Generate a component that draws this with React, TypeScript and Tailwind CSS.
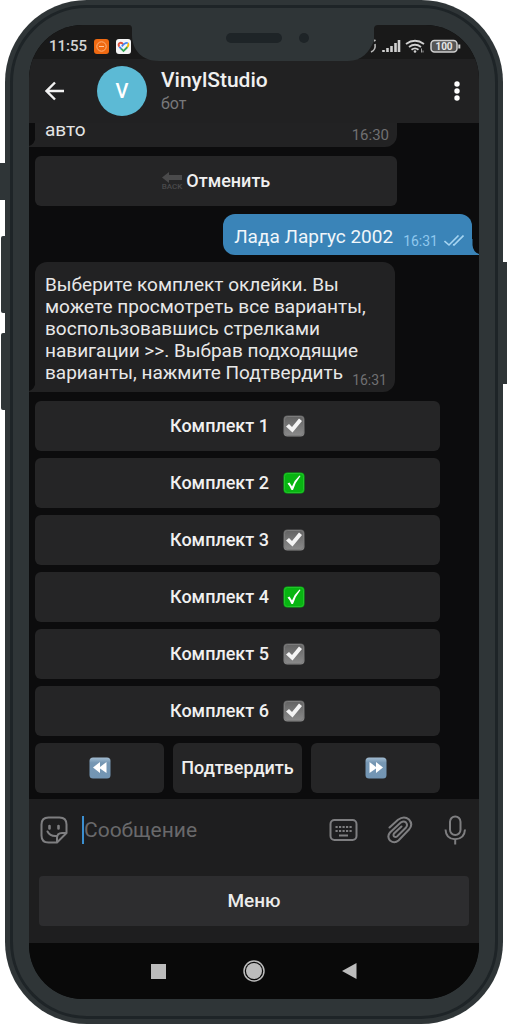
import { useState } from "react";

const KITS = [1, 2, 3, 4, 5, 6];

function Notch() {
  return (
    <svg className="absolute top-0 left-1/2 -translate-x-1/2 z-10" width="250" height="36" viewBox="0 0 250 36" aria-hidden="true">
      <path d="M0 0Q3 0 3 4V10C3 25 13 36 30 36H219C233 36 240 27 245 16V4Q245 0 249 0Z" fill="#2f3537" />
      <rect x="97" y="8" width="56" height="10" rx="5" fill="#1e2427" />
      <circle cx="175" cy="13" r="5" fill="#1e2427" />
    </svg>
  );
}

function StatusBar() {
  return (
    <div className="flex h-[34px] items-center bg-[#191919] pt-2 pl-5 pr-[18px]">
      <span className="text-[15px] leading-5 font-medium text-[#d4d4d4]">11:55</span>
      <svg className="ml-[7px]" width="15" height="15" viewBox="0 0 15 15" aria-hidden="true">
        <rect width="15" height="15" rx="3" fill="#f06a12" />
        <circle cx="7.5" cy="7.5" r="4.7" fill="none" stroke="#ffb27a" strokeWidth="1" />
        <path d="M5 7.5h5" stroke="#ffc79c" strokeWidth="1.2" />
      </svg>
      <svg className="ml-[7px]" width="15" height="15" viewBox="0 0 15 15" aria-hidden="true">
        <rect width="15" height="15" rx="3" fill="#f5f5f5" />
        <g fill="none" strokeWidth="1.8">
          <path d="M7.5 5.7Q5.6 2.8 3.4 4.2Q1.8 5.8 3.4 7.8" stroke="#e0523f" />
          <path d="M3.4 7.8L5.4 9.8" stroke="#4285f4" />
          <path d="M5.2 9.6L7.5 12L11.5 8" stroke="#3aa757" />
          <path d="M11.3 8.2Q13.3 6 11.8 4.2" stroke="#fbbc05" />
          <path d="M11.8 4.2Q9.6 2.8 5.8 7.4" stroke="#4285f4" />
        </g>
      </svg>
      <svg className="ml-auto" width="91" height="16" viewBox="0 0 91 16" aria-hidden="true">
        <path d="M1 14Q6 12 5 6M4 3L5.5 2" fill="none" stroke="#b8b8b8" strokeWidth="1.6" />
        <g stroke="#d0d0d0" strokeWidth="2.6">
          <path d="M13.5 14v-2M17.5 14v-4M21.5 14v-6M25.500 14V5M29 14V2" />
        </g>
        <g fill="none" stroke="#d0d0d0" strokeWidth="1.8">
          <path d="M36 6Q45 -.5 54 6M39 9Q45 4.500 51 9" />
          <path d="M41.500 11.800Q45 9 48.500 11.800" />
        </g>
        <circle cx="45" cy="13.500" r="1.300" fill="#d0d0d0" />
        <path d="M51.500 10.500v4M53 12.500v2" stroke="#a0a0a0" />
        <rect x="61" y="2.500" width="26" height="11.500" rx="3.500" fill="#555" stroke="#d0d0d0" strokeWidth="1.500" />
        <path d="M89.300 6.500v4" stroke="#d0d0d0" strokeWidth="2" />
        <text x="74" y="11.800" textAnchor="middle" fontSize="10" fontWeight="700" fill="#e6e6e6">100</text>
      </svg>
    </div>
  );
}

function Header() {
  return (
    <header className="flex h-16 items-center bg-[#212122] pl-4 pr-[18px]">
      <button aria-label="Назад" className="text-[#f2f2f2]">
        <svg width="19" height="20" viewBox="0 0 19 20" fill="none" stroke="currentColor" strokeWidth="2.400">
          <path d="M19 10H2M10 1.500L1.500 10L10 18.500" />
        </svg>
      </button>
      <div className="ml-[33px] flex h-[50px] w-[50px] shrink-0 items-center justify-center rounded-full bg-[#5cbad5] text-xl font-medium text-white">
        V
      </div>
      <div className="ml-3.5 flex-1 pt-0.5">
        <h1 className="text-[21px] leading-6 font-medium text-[#f0f0f0]">VinylStudio</h1>
        <p className="text-base leading-6 text-[#78787a]">бот</p>
      </div>
      <button aria-label="Ещё" className="text-white">
        <svg width="8" height="22" viewBox="0 0 8 22" fill="currentColor">
          <circle cx="4" cy="4" r="2.700" />
          <circle cx="4" cy="11" r="2.700" />
          <circle cx="4" cy="18" r="2.700" />
        </svg>
      </button>
    </header>
  );
}

function Tail({ side }: { side: "left" | "right" }) {
  return (
    <svg
      className={side === "left" ? "absolute bottom-0 -left-1.5" : "absolute bottom-0 -right-[7px] -scale-x-100"}
      width="8"
      height="16"
      viewBox="0 0 8 16"
      aria-hidden="true"
    >
      <path d="M8 0H6.500V6Q6 13 0 15V16H8Z" fill={side === "left" ? "#222223" : "#3a84b8"} />
    </svg>
  );
}

function KitMark({ on }: { on: boolean }) {
  return (
    <svg width="22" height="22" viewBox="0 0 22 22" aria-hidden="true">
      <defs>
        <linearGradient id="kitOff" x1="0" y1="0" x2="0" y2="1">
          <stop offset="0" stopColor="#616161" />
          <stop offset="1" stopColor="#8c8c8c" />
        </linearGradient>
      </defs>
      <rect x="0.500" y="0.500" width="21" height="21" rx="4" fill={on ? "#08b512" : "url(#kitOff)"} />
      <rect x="1.500" y="1.500" width="19" height="19" rx="3" fill="none" stroke={on ? "#22c52a" : "#7c7c7c"} />
      {on ? (
        <path d="M4.500 11.500L6.500 10.500L9 14.500Q11.500 8 16.500 3.500L17.500 4Q12.500 10 10 18H8.500Q7 14 4.500 11.500Z" fill="#fff" />
      ) : (
        <path d="M3 11.500L6 9L9 12L16 3.500L19 6L9.500 17.500Z" fill="#f4f4f4" />
      )}
    </svg>
  );
}

function SeekIcon({ forward }: { forward?: boolean }) {
  return (
    <svg className={forward ? "-scale-x-100" : ""} width="22" height="22" viewBox="0 0 22 22" aria-hidden="true">
      <defs>
        <linearGradient id="seek" x1="0" y1="0" x2="0" y2="1">
          <stop offset="0" stopColor="#a3bdd2" />
          <stop offset="0.250" stopColor="#7697b3" />
          <stop offset="1" stopColor="#7295b4" />
        </linearGradient>
      </defs>
      <rect x="0.500" y="0.500" width="21" height="21" rx="3.500" fill="url(#seek)" />
      <path d="M11 5V10L17.500 5V16L11 11.500V16L4 10.500Z" fill="#fff" />
    </svg>
  );
}

const key =
  "flex h-[50px] items-center justify-center rounded-md bg-[#252526] text-lg leading-6 font-medium text-[#f0f0f0]";

function Composer() {
  return (
    <div className="flex h-[62px] items-center bg-[#1e1e1f] pl-[11px] pr-[13px] text-[#7e7e80]">
      <button aria-label="Стикеры">
        <svg width="28" height="28" viewBox="0 0 28 28" fill="none" stroke="currentColor" strokeWidth="2">
          <path d="M17 26.500H8.500Q1.500 26.500 1.500 19.500V8.500Q1.500 1.500 8.500 1.500H19.500Q26.500 1.500 26.500 8.500V17Z" strokeLinejoin="round" />
          <path d="M17 26.500V22Q17 17 22 17H26.500" />
          <path d="M7.500 15.500Q10 20.500 16.500 20" strokeLinecap="round" />
          <path d="M9.500 10v2.500M18.500 10v2.500" strokeWidth="2.600" strokeLinecap="round" />
        </svg>
      </button>
      <span className="ml-3.5 h-7 w-0.5 bg-[#3b8fd0]" />
      <input
        aria-label="Сообщение"
        placeholder="Сообщение"
        className="min-w-0 flex-1 bg-transparent text-[21px] leading-7 text-white outline-none placeholder:text-[#69696b]"
      />
      <button aria-label="Клавиатура">
        <svg width="29" height="24" viewBox="0 0 29 24" fill="none" stroke="currentColor" strokeWidth="2">
          <rect x="1.500" y="2" width="26" height="20" rx="4" />
          <path d="M6.500 9H23M6.500 13H23" strokeDasharray="2.200 1.300" strokeWidth="2.200" />
          <path d="M10 17.500h9" />
        </svg>
      </button>
      <button aria-label="Прикрепить" className="ml-[29px]">
        <svg width="26" height="28" viewBox="0 0 26 28" fill="none" stroke="currentColor" strokeWidth="2" strokeLinecap="round">
          <path d="M2.500 11.500L11 3.800Q17 -.7 22 3.500Q26.500 8.500 22 13.500L11.500 24.500Q7.500 28 3 24.500Q-.3 20.500 3 16.500L14 6.300Q17 4.500 19 6.500Q21 9 19 11.500L10 20.500Q8.500 21.500 7 20.500Q6 19 7 17.500L14.500 10.500" />
        </svg>
      </button>
      <button aria-label="Голосовое сообщение" className="ml-[31px]">
        <svg width="22" height="30" viewBox="0 0 22 30" fill="none" stroke="currentColor" strokeWidth="2">
          <rect x="6" y="1.500" width="10.500" height="18.500" rx="5.250" />
          <path d="M1.500 14.500Q2 24 11 24.200Q20.500 24 21 14.500M11.200 24.200V29.500" />
        </svg>
      </button>
    </div>
  );
}

export default function App() {
  const [picked, setPicked] = useState([2, 4]);

  const toggle = (n: number) =>
    setPicked(picked.includes(n) ? picked.filter((p) => p !== n) : [...picked, n]);

  return (
    <div className="min-h-screen bg-white pl-[5px] pr-1 font-[Roboto,sans-serif]">
      <div className="relative">
        {/* side buttons */}
        <span className="absolute top-[163px] -left-[5px] h-[37px] w-[6px] bg-[#2f3537]" />
        <span className="absolute top-[236px] -left-1 h-[77px] w-[5px] rounded-l-xs bg-[#2f3537]" />
        <span className="absolute top-[333px] -left-1 h-[77px] w-[5px] rounded-l-xs bg-[#2f3537]" />
        <span className="absolute top-[262px] -right-1 h-[122px] w-[5px] bg-[#2f3537]" />

        <div className="relative rounded-[82px] bg-[#2f3537] p-[5px]">
          <div className="rounded-[77px] border-3 border-[#1e2427] px-4 py-[17px]">
            <main className="relative overflow-hidden rounded-[54px] bg-[#0c0c0d]">
              <Notch />
              <StatusBar />
              <Header />

              <section className="flex flex-col pb-1.5 pl-1.5">
                <div className="relative mr-[82px] flex items-end justify-between rounded-br-xl bg-[#222223] pr-2 pb-1 pl-2.5">
                  <span className="pb-[7px] text-[19px] leading-[13px] text-[#e4e4e4]">авто</span>
                  <time className="text-[15px] leading-4 text-[#707072]">16:30</time>
                  <Tail side="left" />
                </div>

                <button className={`${key} mt-[9px] mr-[82px] gap-1`}>
                  <span className="flex flex-col items-center text-[#4a4a4b]">
                    <svg width="20" height="11" viewBox="0 0 20 11" fill="currentColor" aria-hidden="true">
                      <path d="M0 5.500L7 0V3H20V8H7V11Z" />
                    </svg>
                    <span className="text-[8px] leading-2">BACK</span>
                  </span>
                  Отменить
                </button>

                <div className="relative mt-2 mr-[7px] flex items-end self-end rounded-tl-xl rounded-tr-xl rounded-bl-xl bg-[#3a84b8] pt-2.5 pr-2 pb-1.5 pl-[11px]">
                  <span className="text-[19px] leading-[25px] text-[#f0f6fa]">Лада Ларгус 2002</span>
                  <time className="ml-2.5 text-sm leading-4 text-[#8fc8ee]">16:31</time>
                  <svg className="ml-1.5" width="20" height="14" viewBox="0 0 20 14" fill="none" stroke="#a6d5f2" strokeWidth="1.600" aria-label="Прочитано">
                    <path d="M0.500 6L5 10L14.500 0.500M9 9.500L10 10L19.500 0.500" />
                  </svg>
                  <Tail side="right" />
                </div>

                <div className="relative mt-[7px] mr-[84px] flex items-end justify-between rounded-t-xl rounded-br-xl bg-[#222223] pt-3 pr-2 pb-1 pl-2.5">
                  <p className="pb-1 text-[19px] leading-[22px] whitespace-nowrap text-[#e8e8e8]">
                    Выберите комплект оклейки. Вы
                    <br />
                    можете просмотреть все варианты,
                    <br />
                    воспользовавшись стрелками
                    <br />
                    навигации &gt;&gt;. Выбрав подходящие
                    <br />
                    варианты, нажмите Подтвердить
                  </p>
                  <time className="-ml-10 text-sm leading-4 text-[#707072]">16:31</time>
                  <Tail side="left" />
                </div>

                <div className="mt-[9px] mr-[39px] flex flex-col gap-[7px]">
                  {KITS.map((n) => (
                    <button key={n} className={`${key} gap-3.5`} aria-pressed={picked.includes(n)} onClick={() => toggle(n)}>
                      Комплект {n}
                      <KitMark on={picked.includes(n)} />
                    </button>
                  ))}
                  <div className="grid grid-cols-3 gap-[9px]">
                    <button className={key} aria-label="Предыдущие">
                      <SeekIcon />
                    </button>
                    <button className={key}>Подтвердить</button>
                    <button className={key} aria-label="Следующие">
                      <SeekIcon forward />
                    </button>
                  </div>
                </div>
              </section>

              <Composer />

              <div className="bg-[#1e1e1f] px-2.5 pt-[15px] pb-[17px]">
                <button className="h-[50px] w-full rounded-sm bg-[#2d2d2f] text-[19px] leading-6 font-medium text-[#ececec]">
                  Меню
                </button>
              </div>

              <nav className="flex h-14 items-center justify-center gap-[77px] bg-[#090909] text-[#bcbcbc]">
                <button aria-label="Недавние">
                  <svg width="15" height="15" viewBox="0 0 15 15" fill="currentColor">
                    <rect width="15" height="15" />
                  </svg>
                </button>
                <button aria-label="Домой">
                  <svg width="22" height="22" viewBox="0 0 22 22" fill="currentColor">
                    <circle cx="11" cy="11" r="8" />
                    <circle cx="11" cy="11" r="10" fill="none" stroke="currentColor" strokeWidth="1.500" />
                  </svg>
                </button>
                <button aria-label="Назад">
                  <svg width="15" height="16" viewBox="0 0 15 16" fill="currentColor">
                    <path d="M0 8L14.500 0V16Z" />
                  </svg>
                </button>
              </nav>
            </main>
          </div>
        </div>
      </div>
    </div>
  );
}
